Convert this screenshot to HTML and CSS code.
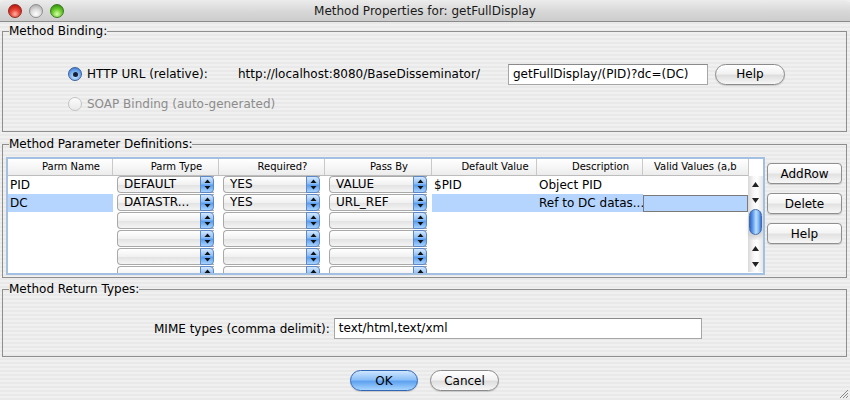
FILE: index.html
```html
<!DOCTYPE html>
<html>
<head>
<meta charset="utf-8">
<title>Method Properties</title>
<link rel="stylesheet" href="styles.css">
</head>
<body>
<div class="titlebar">
  <div class="lights">
    <span class="light red"></span><span class="light gray"></span><span class="light green"></span>
  </div>
  <div class="title">Method Properties for: getFullDisplay</div>
  <div></div>
</div>
<div class="content">
  <fieldset class="group binding">
    <legend>Method Binding:</legend>
    <div class="binding-inner">
      <div class="bind-row">
        <span class="radio on"></span>
        <span class="lbl http">HTTP URL (relative):</span>
        <span class="base">http://localhost:8080/BaseDisseminator/</span>
        <span class="field urlfield">getFullDisplay/(PID)?dc=(DC)</span>
        <span class="pill help">Help</span>
      </div>
      <div class="bind-row soap">
        <span class="radio off"></span>
        <span class="lbl dim">SOAP Binding (auto-generated)</span>
      </div>
    </div>
  </fieldset>

  <fieldset class="group params">
    <legend>Method Parameter Definitions:</legend>
    <div class="params-inner">
      <div class="table">
        <div class="grid">
          <div class="row head">
            <div class="th">Parm Name</div><div class="th">Parm Type</div><div class="th">Required?</div><div class="th">Pass By</div><div class="th">Default Value</div><div class="th">Description</div><div class="th last">Valid Values (a,b</div>
          </div>
          <div class="body">
            <div class="row">
              <div class="td">PID</div>
              <div class="td"><div class="combo"><span class="cv">DEFAULT</span><span class="ca"><svg width="7" height="11" viewBox="0 0 7 11"><polygon points="3.5,0.5 6.5,4 0.5,4" /><polygon points="0.5,7 6.5,7 3.5,10.5" /></svg></span></div></div>
              <div class="td"><div class="combo"><span class="cv">YES</span><span class="ca"><svg width="7" height="11" viewBox="0 0 7 11"><polygon points="3.5,0.5 6.5,4 0.5,4" /><polygon points="0.5,7 6.5,7 3.5,10.5" /></svg></span></div></div>
              <div class="td"><div class="combo"><span class="cv">VALUE</span><span class="ca"><svg width="7" height="11" viewBox="0 0 7 11"><polygon points="3.5,0.5 6.5,4 0.5,4" /><polygon points="0.5,7 6.5,7 3.5,10.5" /></svg></span></div></div>
              <div class="td">$PID</div>
              <div class="td">Object PID</div>
              <div class="td"></div>
            </div>
            <div class="row">
              <div class="td sel">DC</div>
              <div class="td"><div class="combo"><span class="cv">DATASTR...</span><span class="ca"><svg width="7" height="11" viewBox="0 0 7 11"><polygon points="3.5,0.5 6.5,4 0.5,4" /><polygon points="0.5,7 6.5,7 3.5,10.5" /></svg></span></div></div>
              <div class="td"><div class="combo"><span class="cv">YES</span><span class="ca"><svg width="7" height="11" viewBox="0 0 7 11"><polygon points="3.5,0.5 6.5,4 0.5,4" /><polygon points="0.5,7 6.5,7 3.5,10.5" /></svg></span></div></div>
              <div class="td"><div class="combo"><span class="cv">URL_REF</span><span class="ca"><svg width="7" height="11" viewBox="0 0 7 11"><polygon points="3.5,0.5 6.5,4 0.5,4" /><polygon points="0.5,7 6.5,7 3.5,10.5" /></svg></span></div></div>
              <div class="td sel"></div>
              <div class="td sel">Ref to DC datas...</div>
              <div class="td"><div class="edit"></div></div>
            </div>
            <div class="row">
              <div class="td"></div>
              <div class="td"><div class="combo"><span class="cv"></span><span class="ca"><svg width="7" height="11" viewBox="0 0 7 11"><polygon points="3.5,0.5 6.5,4 0.5,4" /><polygon points="0.5,7 6.5,7 3.5,10.5" /></svg></span></div></div>
              <div class="td"><div class="combo"><span class="cv"></span><span class="ca"><svg width="7" height="11" viewBox="0 0 7 11"><polygon points="3.5,0.5 6.5,4 0.5,4" /><polygon points="0.5,7 6.5,7 3.5,10.5" /></svg></span></div></div>
              <div class="td"><div class="combo"><span class="cv"></span><span class="ca"><svg width="7" height="11" viewBox="0 0 7 11"><polygon points="3.5,0.5 6.5,4 0.5,4" /><polygon points="0.5,7 6.5,7 3.5,10.5" /></svg></span></div></div>
              <div class="td"></div><div class="td"></div><div class="td"></div>
            </div>
            <div class="row">
              <div class="td"></div>
              <div class="td"><div class="combo"><span class="cv"></span><span class="ca"><svg width="7" height="11" viewBox="0 0 7 11"><polygon points="3.5,0.5 6.5,4 0.5,4" /><polygon points="0.5,7 6.5,7 3.5,10.5" /></svg></span></div></div>
              <div class="td"><div class="combo"><span class="cv"></span><span class="ca"><svg width="7" height="11" viewBox="0 0 7 11"><polygon points="3.5,0.5 6.5,4 0.5,4" /><polygon points="0.5,7 6.5,7 3.5,10.5" /></svg></span></div></div>
              <div class="td"><div class="combo"><span class="cv"></span><span class="ca"><svg width="7" height="11" viewBox="0 0 7 11"><polygon points="3.5,0.5 6.5,4 0.5,4" /><polygon points="0.5,7 6.5,7 3.5,10.5" /></svg></span></div></div>
              <div class="td"></div><div class="td"></div><div class="td"></div>
            </div>
            <div class="row">
              <div class="td"></div>
              <div class="td"><div class="combo"><span class="cv"></span><span class="ca"><svg width="7" height="11" viewBox="0 0 7 11"><polygon points="3.5,0.5 6.5,4 0.5,4" /><polygon points="0.5,7 6.5,7 3.5,10.5" /></svg></span></div></div>
              <div class="td"><div class="combo"><span class="cv"></span><span class="ca"><svg width="7" height="11" viewBox="0 0 7 11"><polygon points="3.5,0.5 6.5,4 0.5,4" /><polygon points="0.5,7 6.5,7 3.5,10.5" /></svg></span></div></div>
              <div class="td"><div class="combo"><span class="cv"></span><span class="ca"><svg width="7" height="11" viewBox="0 0 7 11"><polygon points="3.5,0.5 6.5,4 0.5,4" /><polygon points="0.5,7 6.5,7 3.5,10.5" /></svg></span></div></div>
              <div class="td"></div><div class="td"></div><div class="td"></div>
            </div>
            <div class="row">
              <div class="td"></div>
              <div class="td"><div class="combo"><span class="cv"></span><span class="ca"><svg width="7" height="11" viewBox="0 0 7 11"><polygon points="3.5,0.5 6.5,4 0.5,4" /><polygon points="0.5,7 6.5,7 3.5,10.5" /></svg></span></div></div>
              <div class="td"><div class="combo"><span class="cv"></span><span class="ca"><svg width="7" height="11" viewBox="0 0 7 11"><polygon points="3.5,0.5 6.5,4 0.5,4" /><polygon points="0.5,7 6.5,7 3.5,10.5" /></svg></span></div></div>
              <div class="td"><div class="combo"><span class="cv"></span><span class="ca"><svg width="7" height="11" viewBox="0 0 7 11"><polygon points="3.5,0.5 6.5,4 0.5,4" /><polygon points="0.5,7 6.5,7 3.5,10.5" /></svg></span></div></div>
              <div class="td"></div><div class="td"></div><div class="td"></div>
            </div>
          </div>
        </div>
        <div class="sb">
          <div class="sb-corner"></div>
          <div class="sb-btn"><svg width="7" height="5" viewBox="0 0 7 5"><polygon points="3.5,0 7,5 0,5"/></svg></div>
          <div class="sb-btn"><svg width="7" height="5" viewBox="0 0 7 5"><polygon points="0,0 7,0 3.5,5"/></svg></div>
          <div class="sb-track"><div class="thumb"></div></div>
          <div class="sb-btn"><svg width="7" height="5" viewBox="0 0 7 5"><polygon points="3.5,0 7,5 0,5"/></svg></div>
          <div class="sb-btn"><svg width="7" height="5" viewBox="0 0 7 5"><polygon points="0,0 7,0 3.5,5"/></svg></div>
        </div>
      </div>
      <div class="side-buttons">
        <span class="btn">AddRow</span>
        <span class="btn">Delete</span>
        <span class="btn">Help</span>
      </div>
    </div>
  </fieldset>

  <fieldset class="group returns">
    <legend>Method Return Types:</legend>
    <div class="returns-inner">
      <span class="lbl">MIME types (comma delimit):</span>
      <span class="field mimefield">text/html,text/xml</span>
    </div>
  </fieldset>

  <div class="footer">
    <span class="pill ok">OK</span>
    <span class="pill cancel">Cancel</span>
  </div>
</div>
<svg class="grip" width="12" height="12" viewBox="0 0 12 12">
  <line x1="11" y1="3" x2="3" y2="11" stroke="#8a8a8a" stroke-width="1"/>
  <line x1="11" y1="6" x2="6" y2="11" stroke="#8a8a8a" stroke-width="1"/>
  <line x1="11" y1="9" x2="9" y2="11" stroke="#8a8a8a" stroke-width="1"/>
</svg>
</body>
</html>
```
FILE: styles.css
```css
* { box-sizing: border-box; }
html, body { margin: 0; padding: 0; }
body {
  width: 850px;
  height: 400px;
  overflow: hidden;
  position: relative;
  font-family: "DejaVu Sans", "Liberation Sans", sans-serif;
  font-size: 12px;
  color: #000;
  background: repeating-linear-gradient(to bottom, #f0f0f0 0 2px, #e9e9e9 2px 4px);
}

/* title bar */
.titlebar {
  height: 22px;
  display: grid;
  grid-template-columns: 1fr auto 1fr;
  align-items: center;
  background: linear-gradient(#ececec, #d6d6d6 60%, #cdcdcd);
  border-bottom: 1px solid #8b8b8b;
  border-radius: 5px 5px 0 0;
}
.lights { display: flex; gap: 7px; padding-left: 8px; }
.light {
  width: 14px; height: 14px; border-radius: 50%;
  display: block;
}
.light.red {
  background: radial-gradient(circle at 50% 75%, #ffb3a6 0, #e8473a 40%, #b8160c 85%);
  border: 1px solid #8f2b22;
}
.light.gray {
  background: radial-gradient(circle at 50% 75%, #ffffff 0, #dcdcdc 45%, #a9a9a9 90%);
  border: 1px solid #8e8e8e;
}
.light.green {
  background: radial-gradient(circle at 50% 75%, #d6ffb0 0, #6ccb2c 45%, #2e8a0c 90%);
  border: 1px solid #3b7a1e;
}
.title { font-size: 12px; color: #1a1a1a; }

/* content */
.content { padding: 2px 3px 0 2px; }
.group {
  margin: 0;
  padding: 0;
  min-width: 0;
  border: 1px solid #8e8e8e;
}
.group legend {
  margin-left: 6px;
  padding: 0;
  font-size: 12px;
  line-height: 14px;
}

/* binding */
.binding-inner { padding: 25px 0 18px 65px; }
.bind-row { display: flex; align-items: center; height: 22px; }
.bind-row.soap { height: 18px; margin-top: 10px; }
.radio {
  width: 14px; height: 14px; border-radius: 50%;
  margin-right: 5px;
  display: flex; align-items: center; justify-content: center;
}
.radio.on {
  background: radial-gradient(circle at 50% 70%, #cfe6ff 0, #6fa7ea 55%, #2f66c2 100%);
  border: 1px solid #3d5f9a;
}
.radio.on::after {
  content: ""; width: 5px; height: 5px; border-radius: 50%; background: #152036;
}
.radio.off {
  background: linear-gradient(#fbfbfb, #e9e9e9);
  border: 1px solid #c3c3c3;
}
.lbl.http { width: 151px; }
.lbl.dim { color: #8c8c8c; }
.base { width: 270px; }
.field {
  background: #fff;
  border: 1px solid #a6a6a6;
  border-top-color: #8a8a8a;
  height: 21px;
  line-height: 19px;
  padding-left: 4px;
  white-space: nowrap;
  overflow: hidden;
}
.urlfield { width: 200px; margin-right: 7px; }
.pill {
  height: 21px;
  border-radius: 11px;
  border: 1px solid #8b8b8b;
  background: linear-gradient(#ffffff, #f2f2f2 45%, #dedede 55%, #f7f7f7);
  display: flex; align-items: center; justify-content: center;
  box-shadow: 0 1px 1px rgba(0,0,0,0.15);
}
.help { width: 70px; }

/* params */
.params { margin-top: 5px; }
.params-inner { display: flex; padding: 6px 3px 2px 3px; }
.table {
  width: 759px; height: 118px;
  border: 2px solid #a3bfe2;
  display: flex;
  background: #fff;
  overflow: hidden;
}
.grid { width: 740px; flex-shrink: 0; }
.row {
  display: grid;
  grid-template-columns: 105px 106px 106px 107px 105px 106px 105px;
  height: 18px;
}
.row.head {
  height: 17px;
  background: linear-gradient(#ffffff, #f6f6f6 50%, #ececec);
  border-bottom: 1px solid #bdbdbd;
}
.th {
  font-size: 10px;
  line-height: 16px;
  text-align: center;
  padding-left: 22px;
  border-right: 1px solid #c9c9c9;
  white-space: nowrap;
  overflow: hidden;
}
.th.last { border-right: none; text-align: left; padding-left: 11px; }
.body { height: 97px; overflow: hidden; }
.td {
  line-height: 18px;
  padding-left: 2px;
  white-space: nowrap;
  overflow: hidden;
}
.td.sel { background: #b5d5ff; }
.td:has(.combo) { padding: 0 5px 0 4px; }
.combo {
  height: 17px;
  display: flex;
  border: 1px solid #a9a9a9;
  border-right: none;
  border-radius: 4px 0 0 4px;
  background: linear-gradient(#ffffff, #f1f1f1 50%, #e3e3e3 55%, #f4f4f4);
}
.cv { flex: 1; padding-left: 6px; line-height: 15px; overflow: hidden; white-space: nowrap; }
.ca {
  width: 14px;
  border-radius: 0 4px 4px 0;
  background: linear-gradient(to bottom, #d3e8ff, #8bbdf6 45%, #5a9cee 55%, #a8d3fd);
  border: 1px solid #5d88c5;
  display: flex; align-items: center; justify-content: center;
  margin: -1px 0;
}
.ca svg { fill: #111; }
.td:has(.edit) { padding: 1px 0 0 0; }
.edit {
  height: 17px;
  background: #b5d5ff;
  border: 1px solid #7a7a7a;
}

/* scrollbar */
.sb { width: 15px; flex-shrink: 0; display: flex; flex-direction: column; }
.sb > * { flex-shrink: 0; }
.sb-corner { height: 17px; background: #fff; border-left: 1px solid #c9c9c9; }
.sb-btn {
  height: 16px;
  display: flex; align-items: center; justify-content: center;
  background: linear-gradient(to right, #d8d8d8, #f6f6f6 35%, #ffffff 60%, #e6e6e6);
}
.sb-btn svg { fill: #222; }
.sb-track {
  height: 32px;
  background: linear-gradient(to right, #d8d8d8, #f6f6f6 35%, #ffffff 60%, #e6e6e6);
  display: flex; justify-content: center; padding-top: 1px;
}
.thumb {
  width: 13px; height: 26px;
  border-radius: 7px;
  background: linear-gradient(to right, #2f67c9, #6aa5f2 30%, #bfe0ff 55%, #7cb4f4 80%, #3a70cc);
  border: 1px solid #3f6cb0;
  box-shadow: 0 4px 4px rgba(0,0,0,0.15);
}

.side-buttons {
  display: flex; flex-direction: column; gap: 9px;
  margin-left: 2px; padding-top: 6px;
}
.btn {
  width: 75px; height: 21px;
  border: 1px solid #8f8f8f;
  border-radius: 4px;
  background: linear-gradient(#ffffff, #f4f4f4 45%, #e2e2e2 55%, #f7f7f7);
  display: flex; align-items: center; justify-content: center;
  box-shadow: 0 1px 1px rgba(0,0,0,0.15);
  font-size: 12px;
}

/* returns */
.returns { margin-top: 4px; }
.returns-inner {
  display: flex; align-items: center;
  padding: 22px 0 17px 151px;
}
.returns-inner .lbl { margin-right: 4px; }
.mimefield { width: 368px; }

/* footer */
.footer {
  display: flex; justify-content: center; gap: 12px;
  margin-top: 13px;
}
.ok {
  width: 68px;
  border-color: #3266b4;
  background: linear-gradient(#cfe6ff, #8cc0f8 45%, #5ea2f0 55%, #a9d5ff);
}
.cancel { width: 69px; }

.grip { position: absolute; right: 1px; bottom: 1px; }
```
